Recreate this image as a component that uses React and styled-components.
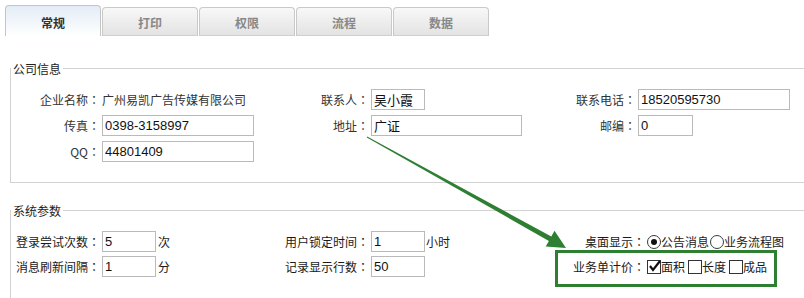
import React from "react";
import styled, { createGlobalStyle } from "styled-components";

const GlobalStyle = createGlobalStyle`
  body {
    margin: 0;
    overflow: hidden;
    background: #fff;
    font-family: "Noto Sans CJK SC", "Liberation Sans", sans-serif;
    font-size: 12px;
    color: #333;
  }
`;

const Page = styled.div`
  position: relative;
  width: 804px;
  height: 298px;
  overflow: hidden;
`;

const TabBar = styled.div`
  display: flex;
  align-items: flex-end;
  height: 31px;
  padding: 5px 0 0 5px;
`;

const Tab = styled.div`
  box-sizing: border-box;
  width: 96px;
  margin-right: 1px;
  height: ${(p) => (p.$active ? 31 : 29)}px;
  padding-top: ${(p) => (p.$active ? 4 : 2)}px;
  line-height: 26px;
  text-align: center;
  font-weight: bold;
  font-size: 12px;
  color: ${(p) => (p.$active ? "#333" : "#888")};
  border: 1px solid ${(p) => (p.$active ? "#c4c4c4" : "#c9c9c9")};
  border-bottom: ${(p) => (p.$active ? "none" : "1px solid #cfcfcf")};
  border-radius: 4px 4px 0 0;
  background: ${(p) =>
    p.$active
      ? "linear-gradient(#e3ecf6, #ffffff)"
      : "linear-gradient(#f8f8f8, #e3e3e3)"};
`;

const Fieldset = styled.fieldset`
  box-sizing: border-box;
  margin: ${(p) => p.$top}px -20px 0 10px;
  padding: 13px 0 ${(p) => p.$bottom}px 0;
  border: 1px solid #d2d2d2;
  min-width: 0;
`;

const Legend = styled.legend`
  padding: 0 2px;
  margin-left: 0;
  line-height: 15px;
  font-size: 12px;
  color: #222;
`;

const Grid = styled.div`
  display: grid;
  grid-template-columns: ${(p) => p.$cols};
  grid-auto-rows: 21px;
  row-gap: ${(p) => p.$gap}px;
  align-items: center;
  color: ${(p) => p.$color};
`;

const LabelBox = styled.span`
  text-align: right;
  padding-right: 2px;
  white-space: nowrap;
`;

// full-width colon centred in its box, like the original UI font
const Colon = styled.span`
  font-family: "Noto Sans CJK JP", "Noto Sans CJK SC", sans-serif;
`;

const Label = ({ children }) => (
  <LabelBox>
    {children}
    <Colon>：</Colon>
  </LabelBox>
);

const Cell = styled.div`
  display: flex;
  align-items: center;
  white-space: nowrap;
`;

const Field = styled.input`
  box-sizing: border-box;
  width: ${(p) => p.$w}px;
  height: 21px;
  margin: 0;
  padding: 0 2px;
  border: 1px solid #bababa;
  border-radius: 0;
  font-family: "Liberation Sans", "Noto Sans CJK SC", sans-serif;
  font-size: 13px;
  color: #111;
  background: #fff;
  outline: none;
`;

const Unit = styled.span`
  margin-left: ${(p) => p.$gap}px;
`;

const Radio = styled.span`
  box-sizing: border-box;
  position: relative;
  width: 14px;
  height: 14px;
  margin-left: ${(p) => p.$gap || 0}px;
  border: 1px solid #3a3a3a;
  border-radius: 50%;
  background: #fff;
  &::after {
    content: "";
    display: ${(p) => (p.$checked ? "block" : "none")};
    position: absolute;
    left: 3px;
    top: 3px;
    width: 6px;
    height: 6px;
    border-radius: 50%;
    background: #111;
  }
`;

const Check = styled.span`
  box-sizing: border-box;
  position: relative;
  width: 14px;
  height: 14px;
  margin-left: ${(p) => p.$gap || 0}px;
  border: 1px solid #333;
  background: #fff;
  svg {
    position: absolute;
    left: 0px;
    top: -2px;
  }
`;

const Overlay = styled.svg`
  position: absolute;
  left: 0;
  top: 0;
  pointer-events: none;
`;

const tabs = ["常规", "打印", "权限", "流程", "数据"];

const CheckMark = () => (
  <svg width="14" height="14" viewBox="0 0 14 14">
    <path d="M2 7 L5 11 L12 2" fill="none" stroke="#111" strokeWidth="2.2" />
  </svg>
);

const App = () => {
  return (
    <Page>
      <GlobalStyle />
      <TabBar>
        {tabs.map((t, i) => (
          <Tab key={t} $active={i === 0}>
            {t}
          </Tab>
        ))}
      </TabBar>

      <Fieldset $top={25} $bottom={20}>
        <Legend>公司信息</Legend>
        <Grid $cols="91px 180px 89px 170px 97px 1fr" $gap={5} $color="#333">
          <Label>企业名称</Label>
          <Cell>广州易凯广告传媒有限公司</Cell>
          <Label>联系人</Label>
          <Cell>
            <Field $w={54} readOnly defaultValue="吴小霞" />
          </Cell>
          <Label>联系电话</Label>
          <Cell>
            <Field $w={152} readOnly defaultValue="18520595730" />
          </Cell>

          <Label>传真</Label>
          <Cell>
            <Field $w={152} readOnly defaultValue="0398-3158997" />
          </Cell>
          <Label>地址</Label>
          <Cell>
            <Field $w={151} readOnly defaultValue="广证" />
          </Cell>
          <Label>邮编</Label>
          <Cell>
            <Field $w={55} readOnly defaultValue="0" />
          </Cell>

          <Label>QQ</Label>
          <Cell>
            <Field $w={152} readOnly defaultValue="44801409" />
          </Cell>
        </Grid>
      </Fieldset>

      <Fieldset $top={20} $bottom={40}>
        <Legend>系统参数</Legend>
        <Grid $cols="91px 183px 86px 189px 87px 1fr" $gap={4} $color="#1a1a1a">
          <Label>登录尝试次数</Label>
          <Cell>
            <Field $w={54} readOnly defaultValue="5" />
            <Unit $gap={2}>次</Unit>
          </Cell>
          <Label>用户锁定时间</Label>
          <Cell>
            <Field $w={54} readOnly defaultValue="1" />
            <Unit $gap={1}>小时</Unit>
          </Cell>
          <Label>桌面显示</Label>
          <Cell>
            <Radio $checked />
            <span>公告消息</span>
            <Radio $gap={1} />
            <span>业务流程图</span>
          </Cell>

          <Label>消息刷新间隔</Label>
          <Cell>
            <Field $w={54} readOnly defaultValue="1" />
            <Unit $gap={2}>分</Unit>
          </Cell>
          <Label>记录显示行数</Label>
          <Cell>
            <Field $w={54} readOnly defaultValue="50" />
          </Cell>
          <Label>业务单计价</Label>
          <Cell>
            <Check>
              <CheckMark />
            </Check>
            <span>面积</span>
            <Check $gap={3} />
            <span>长度</span>
            <Check $gap={3} />
            <span>成品</span>
          </Cell>
        </Grid>
      </Fieldset>

      <Overlay width="804" height="298" viewBox="0 0 804 298">
        <polygon
          points="367.2,136.6 551.3,236.5 554.5,230.8 566,248 545.7,246.6 548.9,240.9 366.8,137.4"
          fill="#2e7f32"
        />
        <rect
          x="556.5"
          y="251.5"
          width="219"
          height="34"
          fill="none"
          stroke="#2e7f32"
          strokeWidth="3"
        />
      </Overlay>
    </Page>
  );
};

export default App;
